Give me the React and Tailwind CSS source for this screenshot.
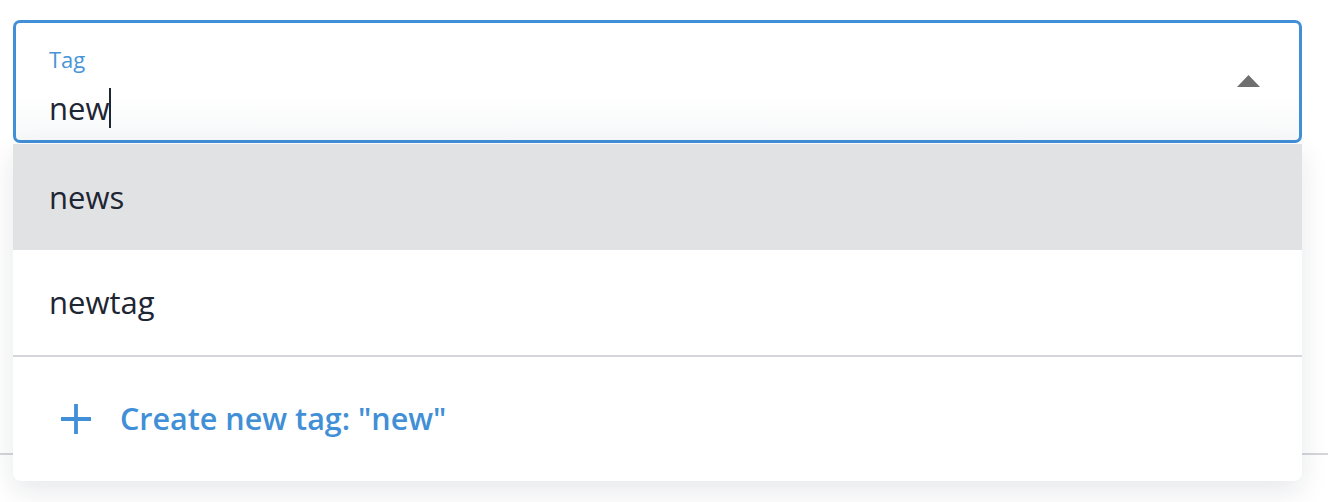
export default function App() {
  return (
    <div className="relative w-[1328px] h-[502px] overflow-hidden bg-white font-['Open_Sans',sans-serif]">
      <div className="px-[13px] pt-[20px] h-[455px] border-b-2 border-[#d4d6db]">
        <div className="w-[1289px] h-[123px] border-[3px] border-[#418fd6] rounded-[7px] bg-gradient-to-b from-white from-60% to-[#f7f8f9] flex items-start pl-[33px] pr-[39px]">
          <div className="flex-1 flex flex-col pt-[23px]">
            <div className="text-[22px] leading-[26px] text-[#4a94d8]">Tag</div>
            <div className="mt-[17px] flex items-center h-[38px]">
              <span className="text-[31px] leading-[38px] text-[#1e2533]">new</span>
              <span className="inline-block w-[2px] h-[40px] bg-[#1e2533]"></span>
            </div>
          </div>
          <svg width="23" height="12" viewBox="0 0 23 12" className="mt-[52px]">
            <polygon points="0,12 11.5,0 23,12" fill="#6f6f6f" />
          </svg>
        </div>
      </div>
      <div className="absolute left-[13px] top-[144px] w-[1289px] bg-white rounded-b-[8px] shadow-[0_10px_28px_rgba(20,30,50,0.10)] overflow-hidden">
        <div className="h-[106px] bg-[#e1e2e4] flex items-center pl-[36px] text-[31px] text-[#1e2533]">news</div>
        <div className="h-[107px] flex items-center pl-[36px] text-[31px] text-[#1e2533] border-b-2 border-[#d4d6db]">newtag</div>
        <div className="h-[124px] flex items-center pl-[47px] text-[#418fd6]">
          <svg width="32" height="32" viewBox="0 0 32 32" className="mr-[28px]">
            <path d="M16 1 V31 M1 16 H31" stroke="#418fd6" strokeWidth="3.8" fill="none" />
          </svg>
          <span className="text-[30.5px] font-semibold">Create new tag: "new"</span>
        </div>
      </div>
    </div>
  );
}
